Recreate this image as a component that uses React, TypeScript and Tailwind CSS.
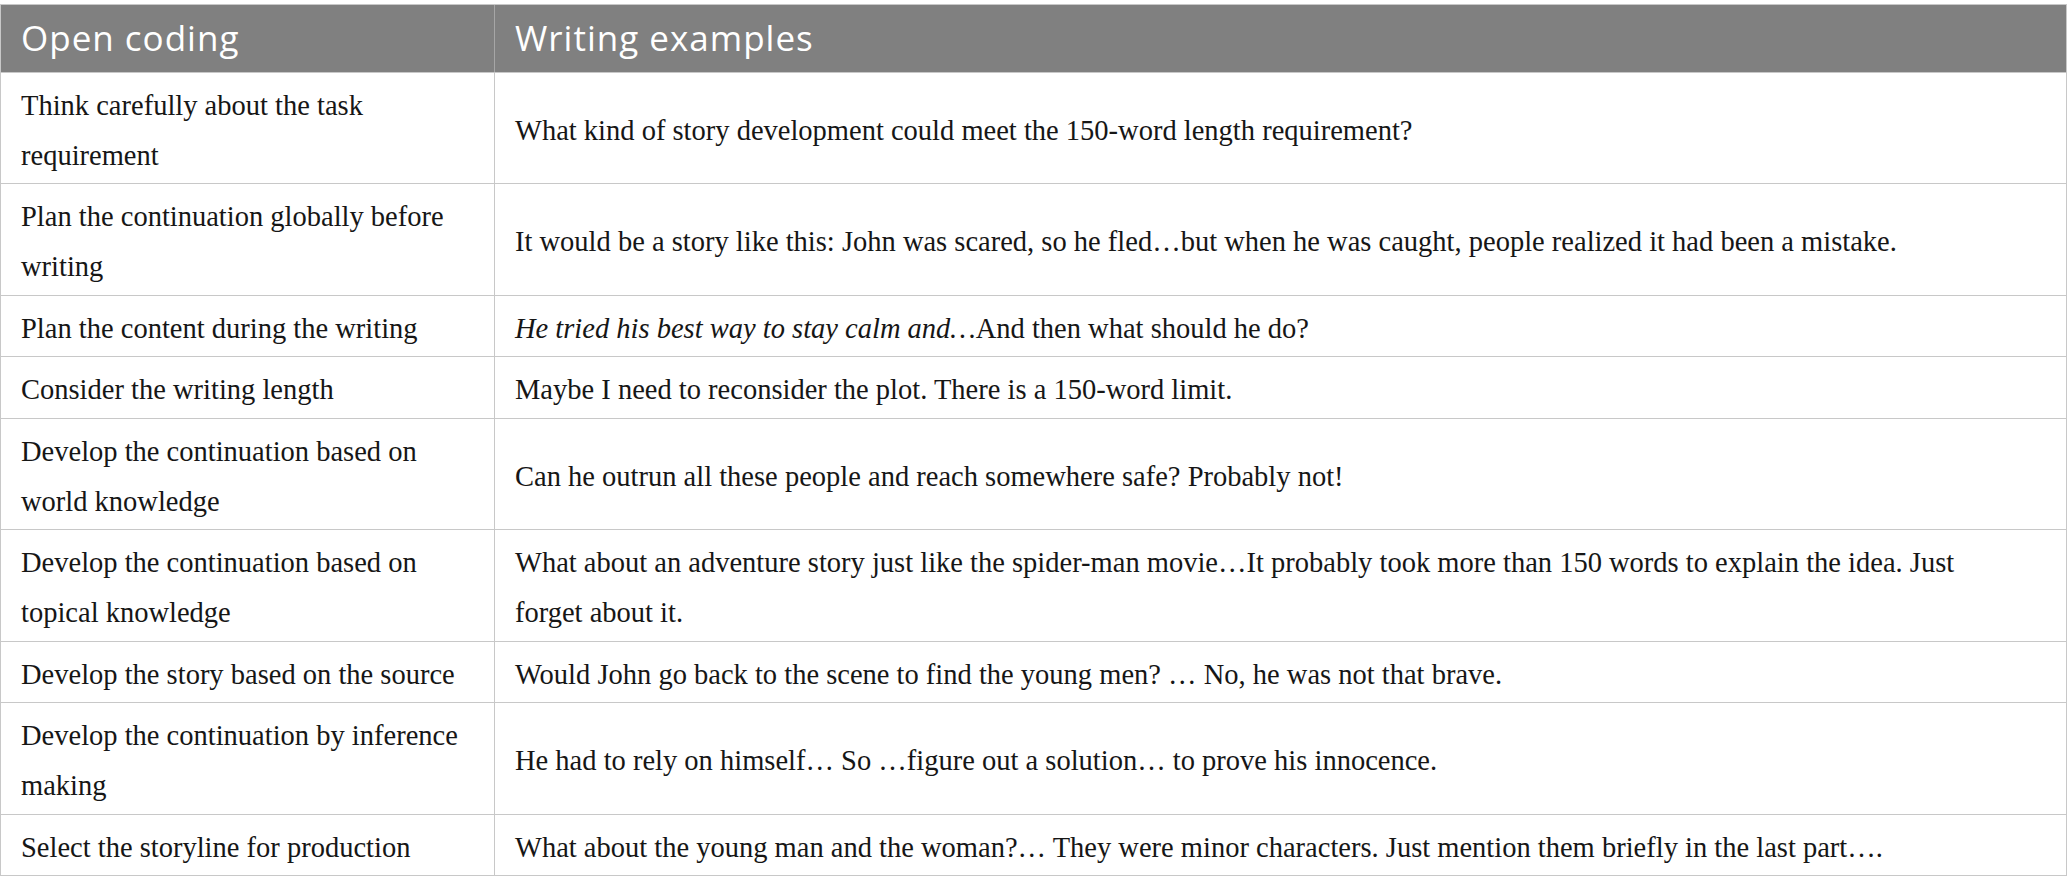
import React from "react";

type Row = { left: React.ReactNode; right: React.ReactNode };

const rows: Row[] = [
  {
    left: (
      <>
        Think carefully about the task
        <br />
        requirement
      </>
    ),
    right: "What kind of story development could meet the 150-word length requirement?",
  },
  {
    left: (
      <>
        Plan the continuation globally before
        <br />
        writing
      </>
    ),
    right:
      "It would be a story like this: John was scared, so he fled\u2026but when he was caught, people realized it had been a mistake.",
  },
  {
    left: "Plan the content during the writing",
    right: (
      <>
        <i>{"He tried his best way to stay calm and\u2026"}</i>
        {"And then what should he do?"}
      </>
    ),
  },
  {
    left: "Consider the writing length",
    right: "Maybe I need to reconsider the plot. There is a 150-word limit.",
  },
  {
    left: (
      <>
        Develop the continuation based on
        <br />
        world knowledge
      </>
    ),
    right: "Can he outrun all these people and reach somewhere safe? Probably not!",
  },
  {
    left: (
      <>
        Develop the continuation based on
        <br />
        topical knowledge
      </>
    ),
    right: (
      <>
        {"What about an adventure story just like the spider-man movie\u2026It probably took more than 150 words to explain the idea. Just"}
        <br />
        {"forget about it."}
      </>
    ),
  },
  {
    left: "Develop the story based on the source",
    right: "Would John go back to the scene to find the young men? \u2026 No, he was not that brave.",
  },
  {
    left: (
      <>
        Develop the continuation by inference
        <br />
        making
      </>
    ),
    right: "He had to rely on himself\u2026 So \u2026figure out a solution\u2026 to prove his innocence.",
  },
  {
    left: "Select the storyline for production",
    right:
      "What about the young man and the woman?\u2026 They were minor characters. Just mention them briefly in the last part\u2026.",
  },
];

export default function App() {
  return (
    <div className="w-[2067px] h-[894px] bg-white pt-[4px]">
      <div className="border border-[#c8c8c8] border-b-0">
        <div className="grid grid-cols-[494px_1fr] h-[67px] bg-[#808080] text-white font-['Open_Sans',sans-serif] text-[35px] tracking-[1px]">
          <div className="flex items-center pl-5 border-r border-[#a6a6a6]">Open coding</div>
          <div className="flex items-center pl-5">Writing examples</div>
        </div>
        {rows.map((r, i) => (
          <div
            key={i}
            className="grid grid-cols-[494px_1fr] border-t border-[#c8c8c8] font-['Liberation_Serif',serif] text-[28.5px] leading-[49.8px] text-[#161616]"
          >
            <div className="flex items-center px-5 pt-[8px] pb-[2.8px] border-r border-[#c8c8c8] whitespace-nowrap">
              <div>{r.left}</div>
            </div>
            <div className="flex items-center px-5 pt-[8px] pb-[2.8px] whitespace-nowrap">
              <div>{r.right}</div>
            </div>
          </div>
        ))}
        <div className="border-t border-[#c8c8c8]" />
      </div>
    </div>
  );
}
